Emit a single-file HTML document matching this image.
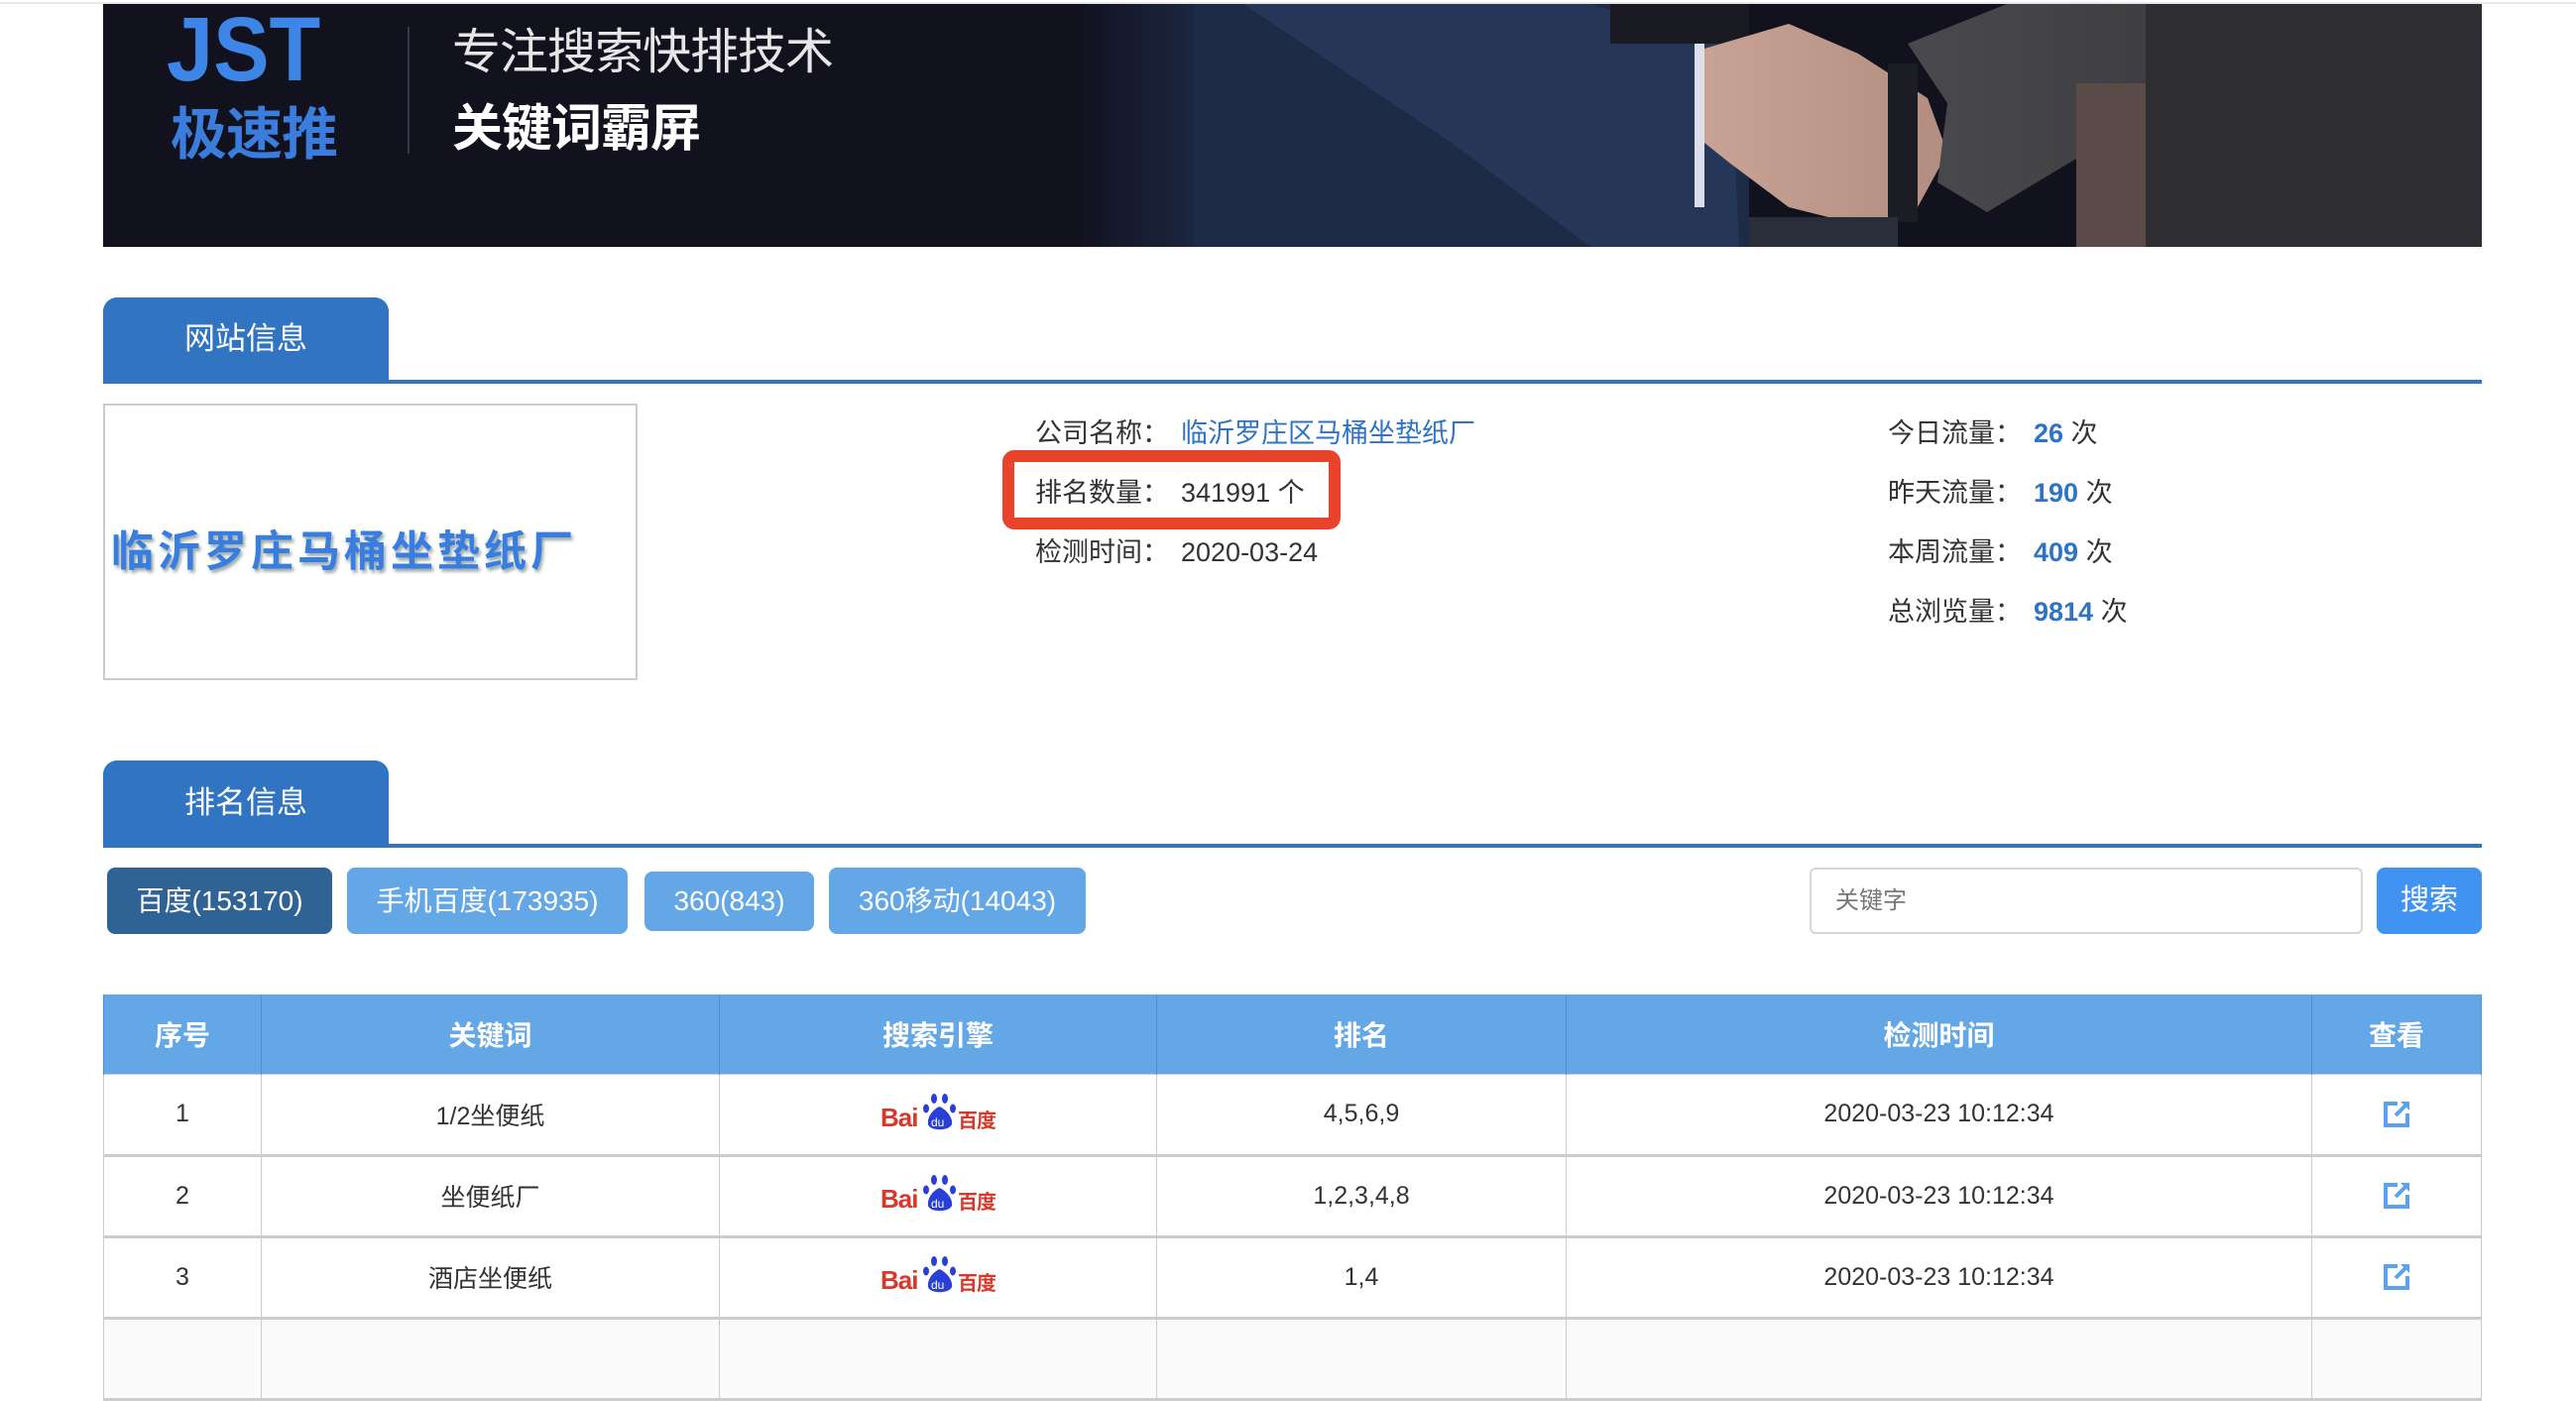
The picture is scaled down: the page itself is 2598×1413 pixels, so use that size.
<!DOCTYPE html>
<html><head><meta charset="utf-8">
<style>
*{margin:0;padding:0;box-sizing:border-box}
body{width:2598px;height:1338px;overflow:hidden;background:#fff;position:relative;font-family:"Liberation Sans","Noto Sans CJK SC",sans-serif;color:#333}
.a{position:absolute}
.tab{position:absolute;left:104px;width:288px;background:#3174c1;border-radius:14px 14px 0 0;color:#fff;font-size:31px;text-align:center}
.line{position:absolute;left:104px;width:2399px;height:4px;background:#3174c1}
.row{position:absolute;font-size:27px;line-height:36px;white-space:nowrap;color:#333}
.b{color:#2f74c4;font-weight:bold}
.btn{position:absolute;color:#fff;font-size:28px;text-align:center;border-radius:8px;background:#64a7e6}
table{position:absolute;left:104px;top:1003px;width:2399px;border-collapse:collapse;font-size:25px}
th{background:#64a7e6;color:#fff;font-weight:bold;font-size:28px;height:80px;border-left:1px solid #4a90dc;border-right:1px solid #4a90dc}
td{height:82px;text-align:center;border:1px solid #ccc;border-bottom:3px solid #ccc;color:#333}
.bd{display:inline-block;position:relative;width:116px;height:44px;vertical-align:middle;white-space:nowrap}
</style></head><body>
<div class="a" style="left:0;top:2px;width:2598px;height:2px;background:#e8e8e8"></div>
<div class="a" style="left:104px;top:4px;width:2399px;height:245px;background:#12111e;overflow:hidden">
<svg width="2399" height="245" style="position:absolute;left:0;top:0">
<defs>
<linearGradient id="g1" x1="0" x2="1"><stop offset="0" stop-color="#12111e"/><stop offset="1" stop-color="#1d2a46"/></linearGradient>
<linearGradient id="sk" x1="0" x2="1"><stop offset="0" stop-color="#c8a294"/><stop offset="1" stop-color="#b38d80"/></linearGradient>
<linearGradient id="gr" x1="0" x2="1"><stop offset="0" stop-color="#4a4a4e"/><stop offset="1" stop-color="#3a393c"/></linearGradient>
</defs>
<rect x="980" y="0" width="140" height="245" fill="url(#g1)"/>
<rect x="1100" y="0" width="560" height="245" fill="#1e2b47"/>
<path d="M1150 0 L1500 0 L1640 40 L1650 245 L1500 245 L1360 140 Z" fill="#253658"/>
<rect x="1520" y="0" width="140" height="40" fill="#1a1a22"/>
<rect x="1605" y="40" width="10" height="165" fill="#dcdfea"/>
<path d="M1615 45 L1700 20 L1770 50 L1840 95 L1860 150 L1830 205 L1780 225 L1700 205 L1640 160 L1615 140 Z" fill="url(#sk)"/>
<path d="M1820 40 L1920 0 L2160 0 L2150 70 L2000 150 L1900 210 L1850 180 L1860 100 Z" fill="url(#gr)"/>
<rect x="1800" y="60" width="30" height="160" fill="#1c1c24"/>
<rect x="1990" y="80" width="80" height="165" fill="#5a4a48"/>
<rect x="2060" y="0" width="339" height="245" fill="#2e2d31"/>
<rect x="1660" y="215" width="150" height="30" fill="#2a2d3a"/>
</svg>
<div class="a" style="left:64px;top:4px;font-size:92px;font-weight:bold;color:#3d86e8;line-height:84px;transform:scaleX(0.92);transform-origin:left">JST</div>
<div class="a" style="left:68px;top:99px;font-size:57px;color:#3a7ddc;line-height:66px;letter-spacing:-1px;font-weight:bold">极速推</div>
<div class="a" style="left:307px;top:23px;width:2px;height:128px;background:#3a3a48"></div>
<div class="a" style="left:352px;top:20px;font-size:49px;color:#e6e6e6;line-height:58px;letter-spacing:-1px">专注搜索快排技术</div>
<div class="a" style="left:352px;top:96px;font-size:51px;color:#fff;font-weight:bold;line-height:60px;letter-spacing:-1px">关键词霸屏</div>
</div>

<div class="tab" style="top:300px;height:84px;line-height:84px">网站信息</div>
<div class="line" style="top:383px"></div>

<div class="a" style="left:104px;top:407px;width:539px;height:279px;border:2px solid #ccc"></div>
<div class="a" style="left:112px;top:522px;font-size:43px;color:#3a7de0;letter-spacing:4px;text-shadow:2px 3px 3px #9aa;white-space:nowrap;font-weight:bold">临沂罗庄马桶坐垫纸厂</div>

<div class="row" style="left:1044px;top:419px">公司名称：<span style="color:#2f74c4;margin-left:12px">临沂罗庄区马桶坐垫纸厂</span></div>
<div class="row" style="left:1044px;top:479px">排名数量：<span style="margin-left:12px">341991 个</span></div>
<div class="row" style="left:1044px;top:539px">检测时间：<span style="margin-left:12px">2020-03-24</span></div>
<div class="a" style="left:1011px;top:454px;width:341px;height:80px;border:12px solid #e8432b;border-radius:12px"></div>

<div class="row" style="left:1904px;top:419px">今日流量：<span class="b" style="margin-left:12px">26</span> 次</div>
<div class="row" style="left:1904px;top:479px">昨天流量：<span class="b" style="margin-left:12px">190</span> 次</div>
<div class="row" style="left:1904px;top:539px">本周流量：<span class="b" style="margin-left:12px">409</span> 次</div>
<div class="row" style="left:1904px;top:599px">总浏览量：<span class="b" style="margin-left:12px">9814</span> 次</div>

<div class="tab" style="top:767px;height:84px;line-height:86px">排名信息</div>
<div class="line" style="top:851px"></div>

<div class="btn" style="left:108px;top:875px;width:227px;height:67px;line-height:67px;background:#2f6295">百度(153170)</div>
<div class="btn" style="left:350px;top:875px;width:283px;height:67px;line-height:67px">手机百度(173935)</div>
<div class="btn" style="left:650px;top:879px;width:171px;height:60px;line-height:60px">360(843)</div>
<div class="btn" style="left:836px;top:875px;width:259px;height:67px;line-height:67px">360移动(14043)</div>

<div class="a" style="left:1825px;top:875px;width:558px;height:67px;border:2px solid #d6d6d6;border-radius:6px;font-size:24px;color:#777;line-height:63px;padding-left:24px">关键字</div>
<div class="btn" style="left:2397px;top:875px;width:106px;height:67px;line-height:67px;background:#4193f2;font-size:29px">搜索</div>

<table>
<tr><th style="width:159px">序号</th><th style="width:462px">关键词</th><th style="width:441px">搜索引擎</th><th style="width:413px">排名</th><th style="width:752px">检测时间</th><th>查看</th></tr>
<tr><td>1</td><td>1/2坐便纸</td><td>BD</td><td>4,5,6,9</td><td>2020-03-23 10:12:34</td><td>IC</td></tr>
<tr><td>2</td><td>坐便纸厂</td><td>BD</td><td>1,2,3,4,8</td><td>2020-03-23 10:12:34</td><td>IC</td></tr>
<tr><td>3</td><td>酒店坐便纸</td><td>BD</td><td>1,4</td><td>2020-03-23 10:12:34</td><td>IC</td></tr>
<tr><td style="background:#fafafa"></td><td style="background:#fafafa"></td><td style="background:#fafafa"></td><td style="background:#fafafa"></td><td style="background:#fafafa"></td><td style="background:#fafafa"></td></tr>
</table>
<script>
document.querySelectorAll('td').forEach(function(t){
if(t.textContent==='BD'){t.innerHTML='<span class="bd"><span style="position:absolute;left:0;top:10px;font-size:26px;font-weight:bold;color:#d8382a;letter-spacing:-1px">Bai</span><svg style="position:absolute;left:42px;top:0" width="36" height="42"><ellipse cx="12" cy="6" rx="3" ry="5" fill="#2a3fd8"/><ellipse cx="23" cy="6" rx="3" ry="5" fill="#2a3fd8"/><ellipse cx="4" cy="16" rx="3" ry="4.5" fill="#2a3fd8"/><ellipse cx="31" cy="16" rx="3" ry="4.5" fill="#2a3fd8"/><path d="M17.5 14 C9 18 5 26 6 32 C8 39 27 39 30 32 C31 26 26 18 17.5 14Z" fill="#2a3fd8"/><text x="9" y="34" font-size="12" fill="#fff" font-family="Liberation Sans">du</text></svg><span style="position:absolute;left:78px;top:12px;font-size:20px;font-weight:bold;color:#d8382a;letter-spacing:-1px">百度</span></span>';}
if(t.textContent==='IC'){t.innerHTML='<svg width="30" height="30" style="vertical-align:middle"><path d="M16 4 H4 V26 H26 V14" fill="none" stroke="#5aa2ec" stroke-width="4"/><path d="M14 16 L25 5" stroke="#5aa2ec" stroke-width="4"/><path d="M19 2 H28 V11 Z" fill="#5aa2ec"/></svg>';}
});
</script>
</body></html>
